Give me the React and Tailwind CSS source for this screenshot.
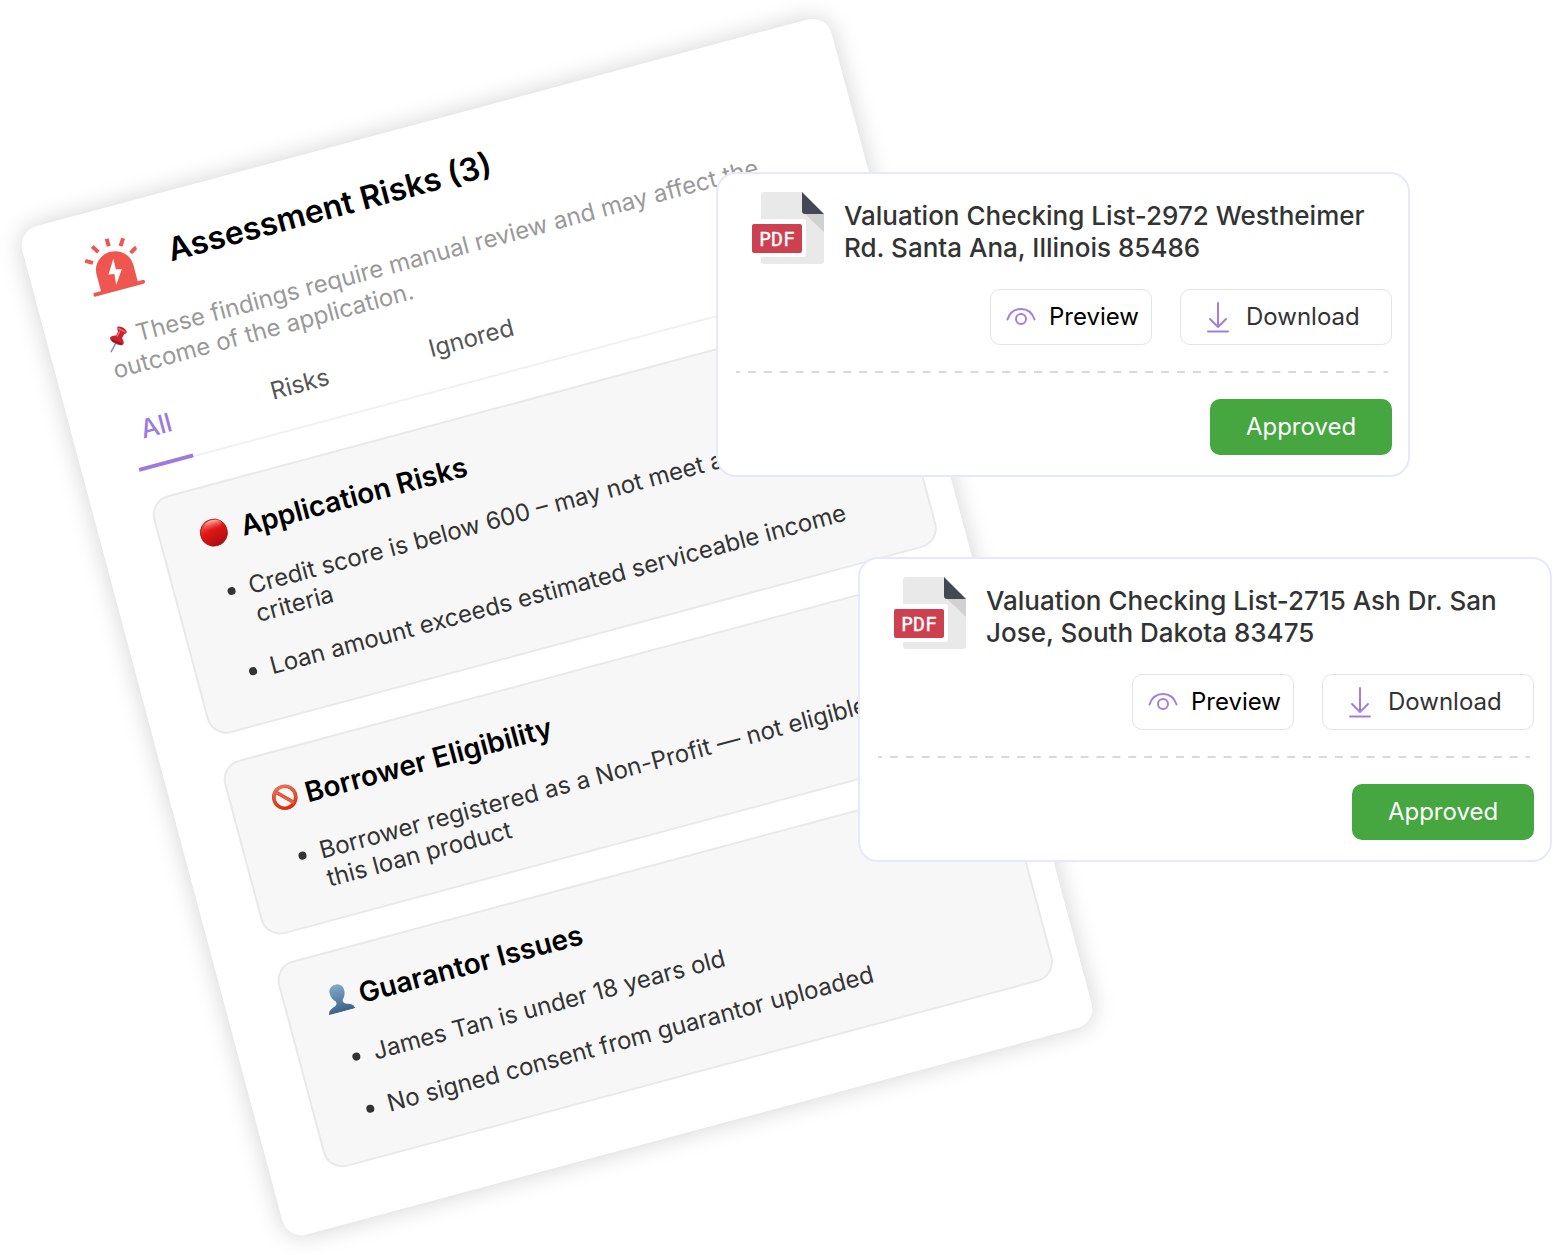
import clsx from "clsx";

const risks = [
   {
      title: "Application Risks",
      icon: <RedCircle />,
      gap: "gap-[14px]",
      padding: "pb-[38px]",
      items: [
         ["Credit score is below 600 – may not meet approval", "criteria"],
         ["Loan amount exceeds estimated serviceable income"],
      ],
   },
   {
      title: "Borrower Eligibility",
      icon: <Prohibited />,
      gap: "gap-[7px]",
      padding: "pb-[26px]",
      items: [
         ["Borrower registered as a Non-Profit — not eligible for", "this loan product"],
      ],
   },
   {
      title: "Guarantor Issues",
      icon: <Person />,
      gap: "gap-[7px]",
      padding: "pb-[34px]",
      items: [
         ["James Tan is under 18 years old"],
         ["No signed consent from guarantor uploaded"],
      ],
   },
];

const tabs = ["All", "Risks", "Ignored"];

const documents = [
   "Valuation Checking List-2972 Westheimer Rd. Santa Ana, Illinois 85486",
   "Valuation Checking List-2715 Ash Dr. San Jose, South Dakota 83475",
];

function Siren() {
   return (
      <svg viewBox="0 0 54 54" className="h-[54px] w-[54px]" fill="none">
         <g stroke="#ee564f" strokeWidth="4" strokeLinecap="round">
            <path d="M2 51.5H51.5" />
            <path strokeLinecap="butt" d="M1 16.200L8 20.200M11.500 4.200L16 11.200M27.500 0.500V8.200M43.500 4.200L39 11.200M54 16.200L47 20.200" />
         </g>
         <path d="M8.500 51V32.500C8.500 22 17 14 27.500 14S46.500 22 46.500 32.500V51Z" fill="#ee564f" />
         <path d="M28.800 21.500L20 35.500L25.800 36.500L24.800 47.500L34.300 33.500L28.500 32.500Z" fill="#fff" />
      </svg>
   );
}

function Pin() {
   return (
      <svg viewBox="0 0 28 28" className="h-[25px] w-[25px]" fill="none">
         <path d="M12 17L3 26.500" stroke="#7c8fa5" strokeWidth="1.600" strokeLinecap="round" />
         <path d="M17 1.500C20 0.500 26.500 6.500 25.500 10C25 11.500 23 11 22 11.500L18.500 15C20 18.500 19.500 22 17 22.500C13 23 5 16 5.500 12C6 9.500 10 9.500 13 10.500L16 7C16.500 5.500 15.500 2.500 17 1.500Z" fill="#c8222c" />
         <path d="M17.500 3.500L23.500 9M14 11.500L17.500 7.500" stroke="#f2727a" strokeWidth="1.500" strokeLinecap="round" />
         <path d="M7.500 14.500L16 21" stroke="#8f1019" strokeWidth="1.500" strokeLinecap="round" />
      </svg>
   );
}

function RedCircle() {
   return (
      <svg viewBox="0 0 28 28" className="mb-[3px] h-7 w-7">
         <defs>
            <linearGradient id="ball" x1="0.3" y1="0" x2="0.6" y2="1">
               <stop offset="0" stopColor="#f4605a" />
               <stop offset="0.4" stopColor="#e01715" />
               <stop offset="1" stopColor="#a80f10" />
            </linearGradient>
            <linearGradient id="shine" x1="0" y1="0" x2="0" y2="1">
               <stop offset="0" stopColor="#ffb3ab" />
               <stop offset="1" stopColor="#e8302c" stopOpacity="0" />
            </linearGradient>
         </defs>
         <circle cx="14" cy="14" r="13.6" fill="url(#ball)" stroke="#b51314" strokeWidth="0.8" />
         <ellipse cx="15" cy="6.500" rx="9" ry="5" fill="url(#shine)" />
      </svg>
   );
}

function Prohibited() {
   return (
      <svg viewBox="0 0 28 28" className="mb-[3px] h-7 w-7" fill="none">
         <defs>
            <linearGradient id="ban" x1="0" y1="0" x2="0" y2="1">
               <stop offset="0" stopColor="#ee7059" />
               <stop offset="1" stopColor="#e02c0a" />
            </linearGradient>
         </defs>
         <circle cx="14" cy="14" r="11" stroke="#d0391f" strokeWidth="3.6" />
         <path d="M6.500 6.500L21.500 21.500" stroke="#d0391f" strokeWidth="3.6" />
         <circle cx="14" cy="14" r="11" stroke="url(#ban)" strokeWidth="2.6" />
         <path d="M6.500 6.500L21.500 21.500" stroke="#ea5f48" strokeWidth="2.6" />
      </svg>
   );
}

function Person() {
   return (
      <svg viewBox="0 0 28 28" className="mb-[3px] h-7 w-7">
         <defs>
            <linearGradient id="bust" x1="0" y1="0" x2="0" y2="1">
               <stop offset="0" stopColor="#82a9c9" />
               <stop offset="1" stopColor="#3d6289" />
            </linearGradient>
         </defs>
         <path d="M14 0C18.500 0 21.500 3 21.500 7.500C21.500 11 20 14.500 17.500 16.500C17 18.500 17.500 20 19.500 21C23 22.500 27 23 27.500 28H0.500C1 23 5 22.500 8.500 21C10.500 20 11 18.500 10.500 16.500C8 14.500 6.500 11 6.500 7.500C6.500 3 9.500 0 14 0Z" fill="url(#bust)" />
      </svg>
   );
}

function PdfFile() {
   return (
      <svg viewBox="0 0 72 72" className="h-[72px] w-[72px] shrink-0">
         <path d="M12 0H50L72 22V69Q72 72 69 72H12Q9 72 9 69V3Q9 0 12 0Z" fill="#e9e9e9" />
         <path d="M53 22H72V40Z" fill="#d1d1d1" />
         <path d="M50 0L72 22H53Q50 22 50 19Z" fill="#434854" />
         <path d="M9 27H51Q54 27 54 30V62Q54 65 51 65H9Z" fill="#fff" />
         <rect y="32" width="50" height="29" rx="2" fill="#cc4050" />
         <text
            x="25"
            y="54"
            textAnchor="middle"
            fill="#fff"
            stroke="#fff"
            strokeWidth="0.3"
            className="font-['DejaVu_Sans_Mono',monospace] text-[20px] font-normal"
         >
            PDF
         </text>
      </svg>
   );
}

function Eye() {
   return (
      <svg viewBox="0 0 30 20" className="h-5 w-[30px]" fill="none" stroke="#a07fe0" strokeWidth="2" strokeLinecap="round">
         <path d="M1.500 12.500C4 5 9 2 15 2S26 5 28.500 12.500" />
         <circle cx="15" cy="12" r="5" />
      </svg>
   );
}

function DownArrow() {
   return (
      <svg viewBox="0 0 24 32" className="h-8 w-6" fill="none" stroke="#a07fe0" strokeWidth="2" strokeLinecap="round" strokeLinejoin="round">
         <path d="M12 2V26M4 18L12 26L20 18M2 30.500H22" />
      </svg>
   );
}

function RiskCard({ risk }) {
   return (
      <section className={clsx("rounded-[20px] border-2 border-[#e9e9e9] bg-[#f7f7f7] px-[39px] pt-[30px]", risk.padding)}>
         <h3 className={clsx("flex items-center text-[28px] leading-[34px] font-semibold text-black", risk.gap)}>
            {risk.icon}
            {risk.title}
         </h3>
         <ul className="mt-7 flex flex-col gap-[25px] pl-3 text-2xl leading-[29px] text-[#333]">
            {risk.items.map((lines, index) => (
               <li key={index} className="flex gap-[14px]">
                  <span className="mt-[11px] h-2 w-2 shrink-0 rounded-full bg-[#333]" />
                  <p className="whitespace-nowrap">
                     {lines.map((line) => (
                        <span key={line} className="block">
                           {line}
                        </span>
                     ))}
                  </p>
               </li>
            ))}
         </ul>
      </section>
   );
}

function DocumentCard({ title, className }) {
   return (
      <article className={clsx("w-full max-w-[694px] rounded-[20px] border-2 border-[#e6e9fb] bg-white px-4 pt-[18px] pb-5", className)}>
         <div className="flex items-start gap-5 px-[18px]">
            <PdfFile />
            <h2 className="mt-2 text-[26px] leading-8 font-medium text-[#333]">{title}</h2>
         </div>

         <div className="mt-[25px] flex justify-end gap-7 text-2xl">
            <button className="flex h-14 w-[162px] items-center gap-[13px] rounded-[10px] border border-[#e4e4e4] pl-[15px] text-black">
               <Eye />
               Preview
            </button>
            <button className="flex h-14 w-[212px] items-center gap-4 rounded-[10px] border border-[#e4e4e4] pl-[25px] text-[#333]">
               <DownArrow />
               Download
            </button>
         </div>

         <div className="mt-[26px] mr-1 ml-0.5 h-[2px] bg-[linear-gradient(90deg,#d9d9d9_25%,transparent_25%_75%,#d9d9d9_75%)] bg-[length:16px_2px] bg-repeat-round" />

         <div className="mt-[26px] flex justify-end">
            <button className="h-14 w-[182px] rounded-[10px] bg-[#46a640] text-2xl text-white">Approved</button>
         </div>
      </article>
   );
}

export default function App() {
   return (
      <main className="grid min-h-screen grid-cols-1 overflow-hidden bg-white font-['Inter',sans-serif]">
         <div className="col-start-1 row-start-1 mt-[105px] mb-[106px] ml-[138px] w-full max-w-[838px] -rotate-15 rounded-[20px] bg-white px-[27px] pt-[30px] pb-12 shadow-[0_0_24px_rgba(0,0,0,0.18)]">
            <header className="flex items-start gap-[30px] px-[30px]">
               <Siren />
               <h1 className="mt-2 text-[32px] leading-[39px] font-semibold text-black">Assessment Risks (3)</h1>
            </header>

            <p className="mt-[31px] ml-[30px] text-2xl leading-[29px] whitespace-nowrap text-[#999]">
               <span className="inline-block h-7 align-middle">
                  <Pin />
               </span>{" "}
               These findings require manual review and may affect the
               <br />
               outcome of the application.
            </p>

            <nav className="mx-[29px] mt-[26px] flex gap-20 border-b-2 border-[#f1f1f1]">
               {tabs.map((tab) => (
                  <button
                     key={tab}
                     className={clsx(
                        "-mb-[2px]",
                        tab === "All"
                           ? "border-b-4 border-[#9d7bdd] px-3 pt-2 pb-5 text-[26px] leading-8 font-medium text-[#9d7bdd]"
                           : "px-3 pb-6 text-2xl leading-[29px] text-[#555]"
                     )}
                  >
                     {tab}
                  </button>
               ))}
            </nav>

            <div className="mt-[30px] mr-[-1px] ml-[30px] flex flex-col gap-7">
               {risks.map((risk) => (
                  <RiskCard key={risk.title} risk={risk} />
               ))}
            </div>
         </div>

         <div className="z-10 col-start-1 row-start-1 mt-[172px] mr-px flex w-full max-w-[836px] flex-col gap-20 self-start justify-self-end">
            {documents.map((title, index) => (
               <DocumentCard key={title} title={title} className={index % 2 ? "self-end" : "self-start"} />
            ))}
         </div>
      </main>
   );
}
